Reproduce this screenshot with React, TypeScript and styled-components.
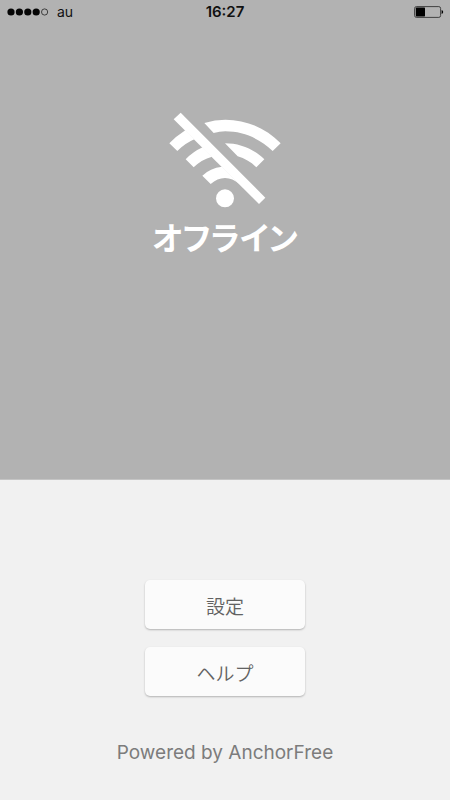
import React from "react";
import styled, { createGlobalStyle } from "styled-components";

const GlobalStyle = createGlobalStyle`
  * { box-sizing: border-box; }
  body { margin: 0; background: #f1f1f1; }
`;

const Screen = styled.div`
  display: flex;
  flex-direction: column;
  min-height: 100vh;
  font-family: Inter, "Noto Sans CJK JP", sans-serif;
`;

const Hero = styled.section`
  display: flex;
  flex-direction: column;
  min-height: 60vh;
  background: #b2b2b2;
  border-bottom: 1px solid #c4c4c4;
`;

const StatusBar = styled.header`
  display: grid;
  grid-template-columns: 1fr auto 1fr;
  align-items: center;
  height: 24px;
  padding: 0 6px;
  color: #111;
  font-size: 14px;
  line-height: 16px;
`;

const Carrier = styled.div`
  display: flex;
  align-items: center;
  gap: 8px;
`;

const Clock = styled.time`
  font-size: 15px;
  font-weight: 600;
`;

const BatterySlot = styled.div`
  display: flex;
  justify-content: flex-end;
`;

const Status = styled.div`
  display: flex;
  flex-direction: column;
  align-items: center;
  padding-top: 80px;
`;

const StatusTitle = styled.h1`
  margin: 0;
  color: #fff;
  font-family: "Noto Sans CJK JP", sans-serif;
  font-size: 32px;
  font-weight: 700;
  line-height: 44px;
  font-feature-settings: "palt";
`;

const Panel = styled.main`
  display: flex;
  flex-direction: column;
  align-items: center;
  flex: 1;
  padding: 100px 16px 32px;
  background: #f1f1f1;
`;

const Actions = styled.nav`
  display: flex;
  flex-direction: column;
  gap: 18px;
`;

const ActionButton = styled.button`
  width: 160px;
  height: 49px;
  padding: 2px 0 0;
  border: 0;
  border-radius: 5px;
  background: #fbfbfb;
  box-shadow: 0 1px 2px rgba(0, 0, 0, 0.26);
  color: #626262;
  font-family: "Noto Sans CJK JP", sans-serif;
  font-size: 19px;
  font-weight: 350;
  line-height: 28px;
  cursor: pointer;
`;

const Credit = styled.footer`
  margin-top: 44px;
  color: #7c7c7c;
  font-size: 19px;
  font-weight: 400;
  line-height: 26px;
`;

function SignalDots() {
  return (
    <svg width="43" height="10" viewBox="0 0 43 10" aria-label="電波強度">
      {[5, 13.4, 21.8, 30.2].map((x) => (
        <circle key={x} cx={x} cy="5" r="3.6" fill="#050505" />
      ))}
      <circle cx="38.6" cy="5" r="3.1" fill="none" stroke="#222" strokeWidth="0.8" />
    </svg>
  );
}

function Battery() {
  return (
    <svg width="30" height="12" viewBox="0 0 30 12" aria-label="バッテリー">
      <rect x="0.6" y="0.6" width="26" height="10.8" rx="1.8" fill="none" stroke="#333" strokeWidth="0.9" />
      <rect x="1.8" y="1.6" width="9.2" height="8.8" rx="0.6" fill="#000" />
      <path d="M27.6 4 Q29.2 4.4 29.2 6 Q29.2 7.6 27.6 8 Z" fill="#000" />
    </svg>
  );
}

function OfflineIcon() {
  return (
    <svg width="130" height="110" viewBox="0 0 390 330" fill="#fff" aria-hidden="true">
      <path d="M62 26 L316 281 L297 300 L41 46 Z" />
      <path d="M133 57 Q165 47 196 47 C260 47 318 73 362 118 L338 141 C300 104 250 82 196 82 Q178 82 161 87 Z" />
      <path d="M195 118 C240 118 283 136 313 166 L289 190 C273 174 254 163 233 157 Z" />
      <path d="M76 79 Q48 97 28 118 L52 141 Q75 118 103 106 Z" />
      <path d="M128 130 Q99 143 77 166 L101 190 Q125 166 156 158 Z" />
      <path d="M186 188 Q150 192 127 215 L152 240 Q172 222 195 222 Q218 222 238 240 Z" />
      <circle cx="195" cy="283" r="27" />
    </svg>
  );
}

export default function App() {
  return (
    <>
      <GlobalStyle />
      <Screen lang="ja">
        <Hero>
          <StatusBar>
            <Carrier>
              <SignalDots />
              <span>au</span>
            </Carrier>
            <Clock>16:27</Clock>
            <BatterySlot>
              <Battery />
            </BatterySlot>
          </StatusBar>
          <Status>
            <OfflineIcon />
            <StatusTitle>オフライン</StatusTitle>
          </Status>
        </Hero>
        <Panel>
          <Actions>
            <ActionButton type="button">設定</ActionButton>
            <ActionButton type="button">ヘルプ</ActionButton>
          </Actions>
          <Credit>Powered by AnchorFree</Credit>
        </Panel>
      </Screen>
    </>
  );
}
